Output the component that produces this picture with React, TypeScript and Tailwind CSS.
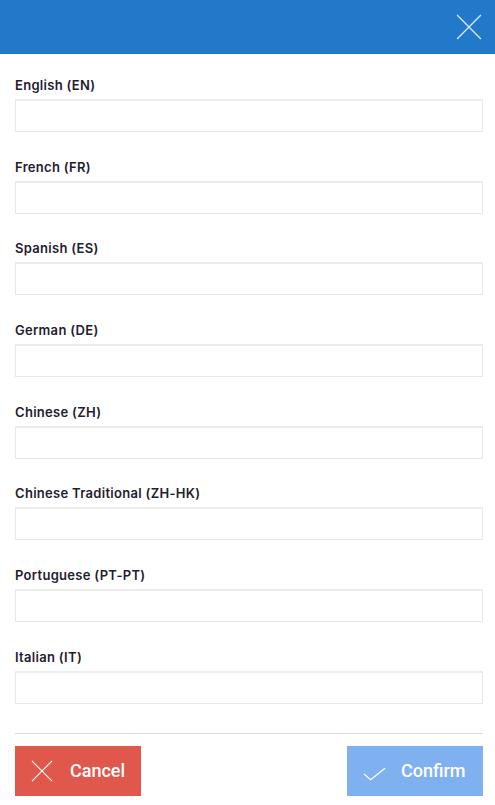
import { useState } from "react";

const languages = [
  { code: "en", label: "English (EN)" },
  { code: "fr", label: "French (FR)" },
  { code: "es", label: "Spanish (ES)" },
  { code: "de", label: "German (DE)" },
  { code: "zh", label: "Chinese (ZH)" },
  { code: "zh-hk", label: "Chinese Traditional (ZH-HK)" },
  { code: "pt-pt", label: "Portuguese (PT-PT)" },
  { code: "it", label: "Italian (IT)" },
];

function CrossIcon({ className }: { className?: string }) {
  return (
    <svg viewBox="0 0 24 24" className={className} fill="none" stroke="currentColor" strokeWidth={1.2}>
      <path d="M1 1L23 23M23 1L1 23" />
    </svg>
  );
}

function CheckIcon({ className }: { className?: string }) {
  return (
    <svg viewBox="0 0 24 14" className={className} fill="none" stroke="currentColor" strokeWidth={1.2}>
      <path d="M1 7L8 13L23 1" />
    </svg>
  );
}

export default function App() {
  const [values, setValues] = useState<Record<string, string>>({});

  return (
    <div
      className="w-[495px] h-[805px] bg-white flex flex-col"
      style={{ fontFamily: "Roboto, 'Noto Sans', sans-serif" }}
    >
      {/* Header */}
      <div className="h-[54px] bg-[#2379c9] flex items-center justify-end pr-[13px] shrink-0">
        <button className="text-[#dce9f7]">
          <CrossIcon className="w-[26px] h-[26px]" />
        </button>
      </div>

      {/* Fields */}
      <div className="pl-[15px] pr-[12px] pt-[22px] flex flex-col gap-[25.7px]">
        {languages.map((lang) => (
          <div key={lang.code} className="flex flex-col">
            <label
              className="text-[13px] font-semibold text-[#1f2030] leading-[18px] mb-[5px] tracking-[0.3px]"
              style={{ fontFamily: "Inter, Roboto, sans-serif" }}
            >
              {lang.label}
            </label>
            <input
              type="text"
              value={values[lang.code] ?? ""}
              onChange={(e) => setValues({ ...values, [lang.code]: e.target.value })}
              className="h-[33px] w-full border border-[#e8e8e8] border-t-2 border-t-[#ececec] outline-none px-2 text-sm"
            />
          </div>
        ))}
      </div>

      {/* Footer */}
      <div className="pl-[15px] pr-[12px] mt-[29px]">
        <div className="border-t border-[#dcdcdc]" />
        <div className="flex justify-between mt-[12px]">
          <button className="w-[126px] h-[50px] bg-[#e0574c] text-white flex items-center pl-[16px] gap-[17px]">
            <CrossIcon className="w-[22px] h-[22px]" />
            <span className="text-[18px] font-medium">Cancel</span>
          </button>
          <button className="w-[136px] h-[50px] bg-[#7fb0f0] text-white flex items-center pl-[16px] gap-[15px]">
            <CheckIcon className="w-[23px] h-[14px] mt-[6px]" />
            <span className="text-[18px] font-medium">Confirm</span>
          </button>
        </div>
      </div>
    </div>
  );
}
